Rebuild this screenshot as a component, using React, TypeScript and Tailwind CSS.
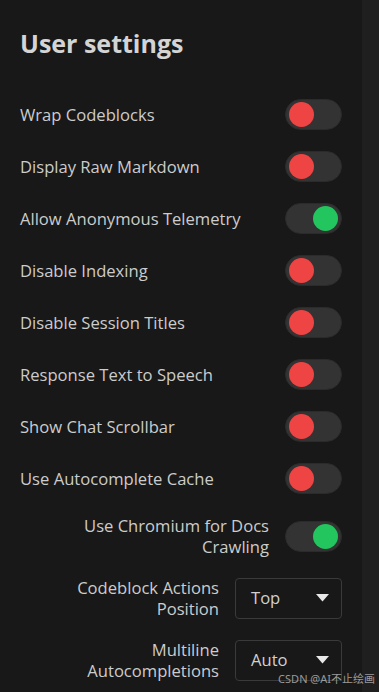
import React, { useState } from "react";

const Toggle = ({ on, onClick }: { on: boolean; onClick: () => void }) => (
  <button
    onClick={onClick}
    className={`flex h-[31px] w-[57px] shrink-0 items-center rounded-full border border-[#2b2b2b] bg-[#333333] px-[3px] ${
      on ? "justify-end" : "justify-start"
    }`}
  >
    <span
      className={`block h-[25px] w-[25px] rounded-full ${
        on ? "bg-[#22c55e]" : "bg-[#ef4444]"
      }`}
    />
  </button>
);

const Select = ({ value }: { value: string }) => (
  <div className="flex h-[41px] w-[107px] shrink-0 items-center justify-between rounded-[4px] border border-[#3a3a3a] bg-[#181818] pl-[15px] pr-[12px] text-[16.6px] text-[#d0d0d0]">
    <span>{value}</span>
    <svg width="13" height="8" viewBox="0 0 13 8">
      <polygon points="0,0 13,0 6.5,7.5" fill="#e8e8e8" />
    </svg>
  </div>
);

const App = () => {
  const [toggles, setToggles] = useState<any>({
    "Wrap Codeblocks": false,
    "Display Raw Markdown": false,
    "Allow Anonymous Telemetry": true,
    "Disable Indexing": false,
    "Disable Session Titles": false,
    "Response Text to Speech": false,
    "Show Chat Scrollbar": false,
    "Use Autocomplete Cache": false,
  });
  const [chromium, setChromium] = useState(true);

  return (
    <div
      className="relative flex h-[692px] w-[379px] overflow-hidden bg-[#1f1f1f]"
      style={{ fontFamily: '"Open Sans", "Noto Sans", sans-serif' }}
    >
      <div className="flex h-full w-[362px] flex-col bg-[#181818] px-[20px] pt-[28px]">
        <h1 className="text-[25px] font-bold leading-[31px] text-[#d4d4d4]">
          User settings
        </h1>
        <div className="mt-[40px] flex flex-col gap-[20px]">
          {Object.keys(toggles).map((label) => (
            <div key={label} className="flex h-[32px] items-center justify-between">
              <span className="text-[16.6px] text-[#cccccc]">{label}</span>
              <div className="-mt-[2px]">
                <Toggle
                  on={toggles[label]}
                  onClick={() => setToggles({ ...toggles, [label]: !toggles[label] })}
                />
              </div>
            </div>
          ))}
          <div className="flex items-center justify-end gap-[16px]">
            <span className="text-right text-[16.6px] leading-[21px] text-[#cccccc]">
              Use Chromium for Docs
              <br />
              Crawling
            </span>
            <Toggle on={chromium} onClick={() => setChromium(!chromium)} />
          </div>
          <div className="flex items-center justify-end gap-[16px]">
            <span className="text-right text-[16.6px] leading-[21px] text-[#cccccc]">
              Codeblock Actions
              <br />
              Position
            </span>
            <Select value="Top" />
          </div>
          <div className="flex items-center justify-end gap-[16px]">
            <span className="text-right text-[16.6px] leading-[21px] text-[#cccccc]">
              Multiline
              <br />
              Autocompletions
            </span>
            <Select value="Auto" />
          </div>
        </div>
      </div>
      <span
        className="absolute bottom-[5px] right-[4px] text-[11px] text-[#9a9a9a]"
        style={{ fontFamily: '"Noto Sans", "Noto Sans CJK SC", sans-serif' }}
      >
        CSDN @AI不止绘画
      </span>
    </div>
  );
};

export default App;
